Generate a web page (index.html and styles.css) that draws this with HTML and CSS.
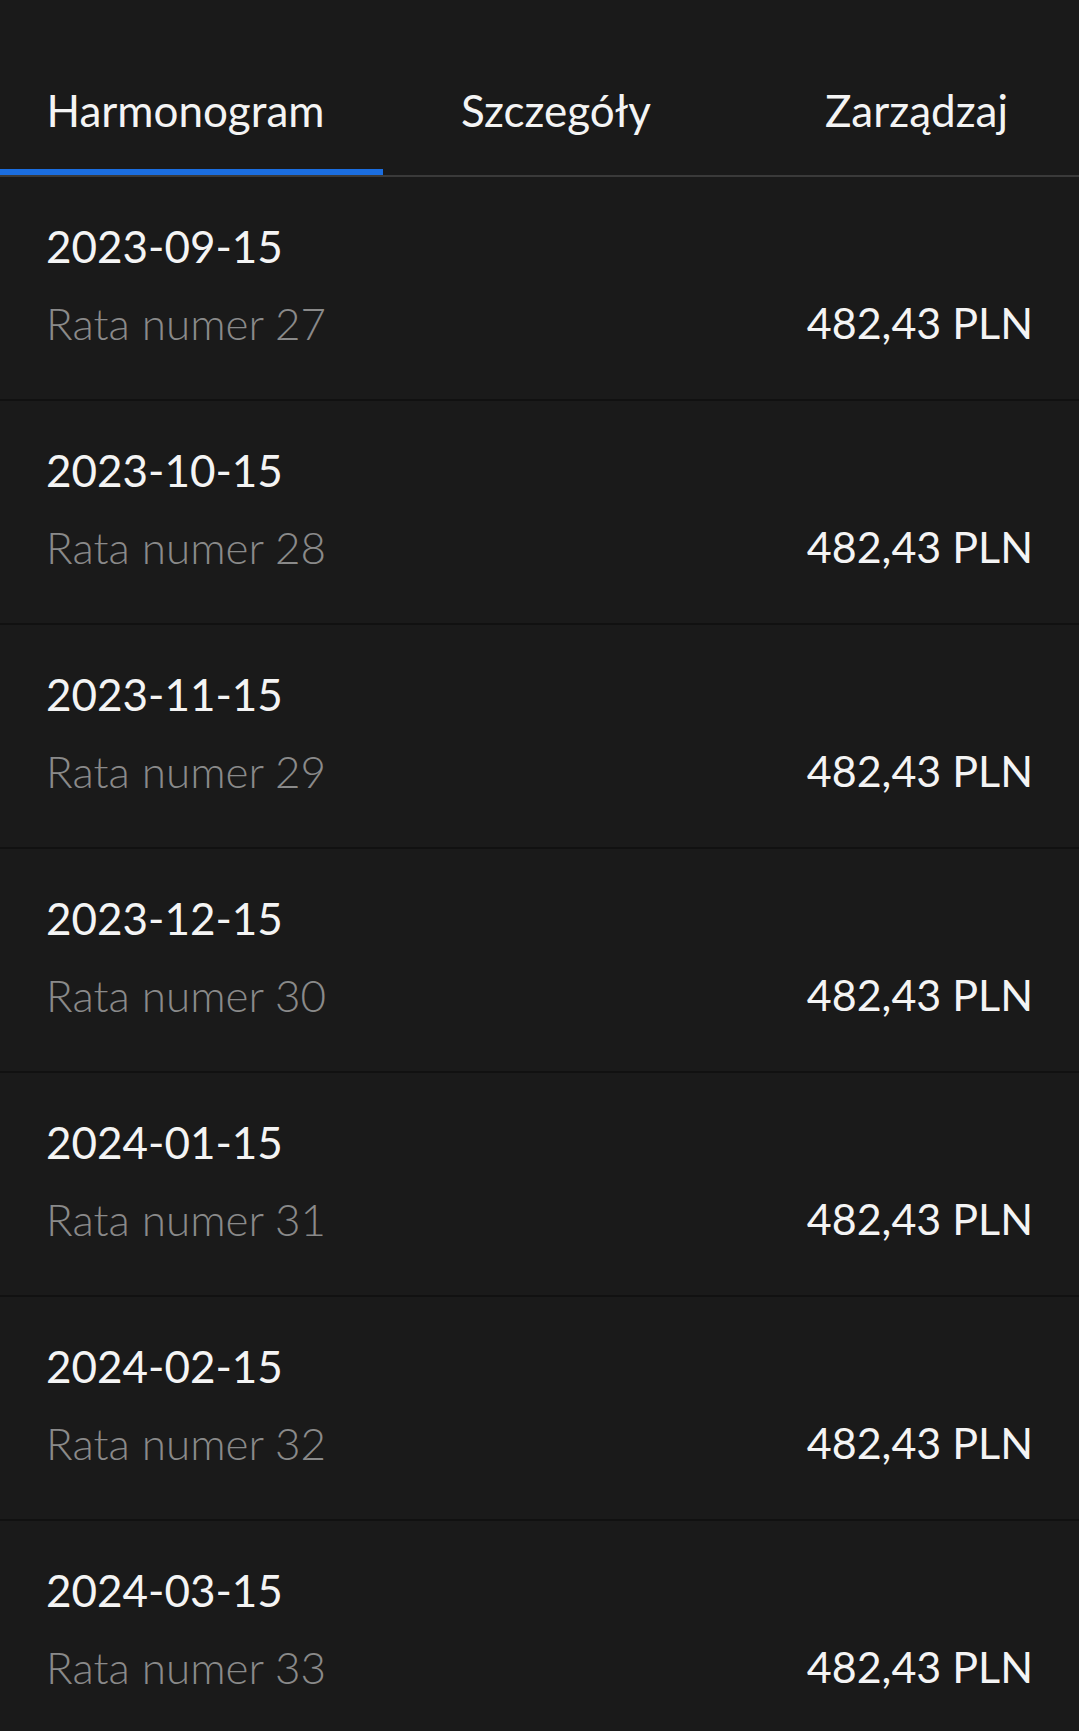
FILE: index.html
```html
<!DOCTYPE html>
<html lang="pl">
<head>
    <meta charset="UTF-8">
    <meta name="viewport" content="width=device-width, initial-scale=1.0">
    <title>Harmonogram</title>
    <link rel="stylesheet" href="styles.css">
</head>
<body>
    <div class="tabs">
        <div class="tab tab-schedule active">Harmonogram</div>
        <div class="tab tab-details">Szczegóły</div>
        <div class="tab tab-manage">Zarządzaj</div>
    </div>

    <div class="schedule">
        <div class="installment">
            <div class="info">
                <div class="date">2023-09-15</div>
                <div class="label">Rata numer 27</div>
            </div>
            <div class="amount">482,43 PLN</div>
        </div>
        <div class="installment">
            <div class="info">
                <div class="date">2023-10-15</div>
                <div class="label">Rata numer 28</div>
            </div>
            <div class="amount">482,43 PLN</div>
        </div>
        <div class="installment">
            <div class="info">
                <div class="date">2023-11-15</div>
                <div class="label">Rata numer 29</div>
            </div>
            <div class="amount">482,43 PLN</div>
        </div>
        <div class="installment">
            <div class="info">
                <div class="date">2023-12-15</div>
                <div class="label">Rata numer 30</div>
            </div>
            <div class="amount">482,43 PLN</div>
        </div>
        <div class="installment">
            <div class="info">
                <div class="date">2024-01-15</div>
                <div class="label">Rata numer 31</div>
            </div>
            <div class="amount">482,43 PLN</div>
        </div>
        <div class="installment">
            <div class="info">
                <div class="date">2024-02-15</div>
                <div class="label">Rata numer 32</div>
            </div>
            <div class="amount">482,43 PLN</div>
        </div>
        <div class="installment">
            <div class="info">
                <div class="date">2024-03-15</div>
                <div class="label">Rata numer 33</div>
            </div>
            <div class="amount">482,43 PLN</div>
        </div>
    </div>
</body>
</html>
```

FILE: styles.css
```css
html {
    overflow: hidden;
}

body {
    font-family: 'Lato', 'Open Sans', sans-serif;
    background-color: #1a1a1a;
    color: #f4f4f4;
    margin: 0;
    padding: 0;
}

.tabs {
    display: flex;
    overflow: hidden;
    border-bottom: 2px solid #3a3a3a;
}

.tab {
    flex-shrink: 0;
    box-sizing: border-box;
    text-align: center;
    font-size: 44px;
    line-height: 56px;
    padding-top: 82px;
    padding-bottom: 31px;
    border-bottom: 6px solid transparent;
}

.tab-schedule {
    width: 383px;
    padding-right: 12px;
}

.tab-details {
    width: 346px;
}

.tab-manage {
    width: 375px;
}

.tab.active {
    border-bottom-color: #1b6ee0;
}

.installment {
    display: flex;
    justify-content: space-between;
    align-items: flex-end;
    padding: 41px 46px 48px 46px;
    border-bottom: 2px solid #111111;
}

.date {
    font-size: 44px;
    line-height: 56px;
}

.label {
    margin-top: 21px;
    font-size: 44px;
    line-height: 56px;
    font-weight: 300;
    color: #8a8a8a;
}

.amount {
    font-size: 43px;
    line-height: 56px;
}
```
